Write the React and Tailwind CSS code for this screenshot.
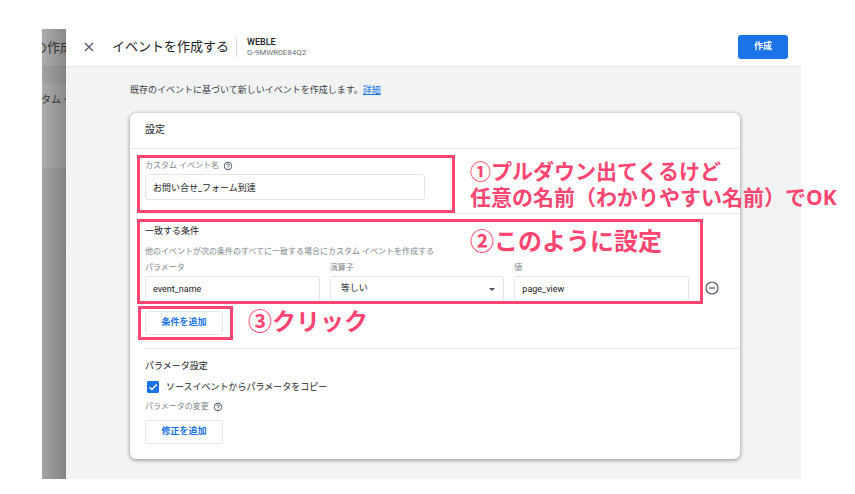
import { useState } from "react";

const HelpIcon = () => (
    <svg className="w-[10px] h-[10px] text-gray-600" viewBox="0 0 24 24" fill="currentColor" aria-hidden="true">
        <path d="M11 18h2v-2h-2v2zm1-16C6.48 2 2 6.48 2 12s4.48 10 10 10 10-4.48 10-10S17.52 2 12 2zm0 18c-4.41 0-8-3.59-8-8s3.59-8 8-8 8 3.59 8 8-3.59 8-8 8zm0-14c-2.21 0-4 1.79-4 4h2c0-1.1.9-2 2-2s2 .9 2 2c0 2-3 1.75-3 5h2c0-2.25 3-2.5 3-5 0-2.21-1.79-4-4-4z" />
    </svg>
)

const Field = ({ id, label, value, onChange }) => (
    <div className="flex-1 min-w-0">
        <label className="block text-[8px] leading-[16px] text-[#80868b]" htmlFor={id}>{label}</label>
        <input
        className="block w-full h-[26px] px-[7px] rounded-[3px] border border-[#e3e5e8] bg-white text-[9px]"
        id={id}
        type="text"
        value={value}
        onChange={(e) => onChange(e.target.value)}/>
    </div>
)

const OutlineButton = ({ children }) => (
    <button type="button" className="block w-[78px] h-[24px] rounded-[3px] border border-[#e3e5e8] bg-white text-[9px] font-bold text-[#1a73e8]">
        {children}
    </button>
)

const Backdrop = () => (
    <div className="relative w-[24px] shrink-0 overflow-hidden whitespace-nowrap bg-[#a1a3a5] text-[#37393b]" aria-hidden="true">
        <div className="h-[38px] bg-[#acacac] border-b border-[#a0a0a0] text-[13px] leading-[37px]">
            <span className="-ml-[8px]">の作成</span>
        </div>
        <div className="mt-[15px] h-[87px] bg-[#acacac] border-y border-[#a0a0a0] pt-[8px] text-[10px] leading-[18px]">
            <span className="-ml-[1px]">タム イベント</span>
        </div>
        <div className="absolute inset-0 bg-gradient-to-r from-black/0 to-black/20" />
    </div>
)

const Header = () => (
    <header className="flex items-center h-[38px] pl-[17px] pr-[13px] pb-[2px] bg-white border-b border-[#e3e5e8]">
        <button type="button" aria-label="閉じる" className="w-[12px] h-[12px] mr-[17px] text-gray-600">
            <svg viewBox="0 0 12 12" fill="none" stroke="currentColor" strokeWidth="1.2">
                <path d="M2 2l8 8M10 2l-8 8" />
            </svg>
        </button>
        <h1 className="text-[13px] leading-[20px]">イベントを作成する</h1>
        <div className="ml-[7px] pl-[10px] h-[20px] border-l border-[#dadce0] font-[Roboto,sans-serif]">
            <div className="text-[9px] leading-[10px] font-medium">WEBLE</div>
            <div className="text-[8px] leading-[12px] text-[#6b7075]">G-9MWR0E84Q2</div>
        </div>
        <button type="button" className="ml-auto w-[50px] h-[24px] rounded-[3px] bg-[#1a73e8] text-[9px] font-bold text-white">作成</button>
    </header>
)

const App = () => {
    const [eventName, setEventName] = useState("お問い合せ_フォーム到達")
    const [param, setParam] = useState("event_name")
    const [operator, setOperator] = useState("等しい")
    const [value, setValue] = useState("page_view")
    const [copy, setCopy] = useState(true)

    return (
        <div lang="ja" className="flex mt-[29px] mb-[15px] ml-[42px] mr-[54px] font-[Roboto,'Noto_Sans_CJK_JP',sans-serif] text-[#202124]">
            <Backdrop />
            <div className="flex-1 min-w-0 bg-[#f1f3f4]">
                <Header />
                <main className="pl-[64px] pr-[61px] pb-[20px]">
                    <p className="py-[15px] text-[9px] leading-[16px] text-[#3c4043]">
                        既存のイベントに基づいて新しいイベントを作成します。<a href="#" className="text-[#1a73e8] underline">詳細</a>
                    </p>

                    <form className="rounded-[6px] bg-white shadow-[0_1px_4px_rgba(0,0,0,0.45)]" onSubmit={(e) => e.preventDefault()}>
                        <h2 className="h-[36px] pl-[15px] border-b border-[#e8eaed] text-[10px] leading-[34px]">設定</h2>

                        <section className="relative h-[65px] ml-[15px] pt-[9px] border-b border-[#e8eaed]">
                            <div className="flex items-center gap-[4px] text-[#80868b]">
                                <label className="text-[8px] leading-[16px]" htmlFor="eventName">カスタム イベント名</label>
                                <HelpIcon />
                            </div>
                            <input
                            className="block w-[280px] h-[26px] px-[7px] rounded-[3px] border border-[#e3e5e8] bg-white text-[9px]"
                            id="eventName"
                            type="text"
                            value={eventName}
                            onChange={(e) => setEventName(e.target.value)}/>
                            <div className="absolute -left-[8px] top-[6px] w-[318px] h-[58px] border-3 border-[#ff4571]" />
                            <p className="absolute left-[325px] top-[9px] whitespace-nowrap font-['Open_Sans','Noto_Sans_CJK_JP',sans-serif] text-[21px] leading-[26px] font-bold text-[#ff4571]">
                                ①プルダウン出てくるけど<br />任意の名前（わかりやすい名前）でOK
                            </p>
                        </section>

                        <section className="relative h-[135px] ml-[15px] pt-[9px] border-b border-[#e8eaed]">
                            <h3 className="text-[9px] leading-[16px]">一致する条件</h3>
                            <p className="mt-[5px] text-[8px] leading-[16px] text-[#80868b]">他のイベントが次の条件のすべてに一致する場合にカスタム イベントを作成する</p>
                            <div className="flex items-end gap-[10px] pr-[21px]">
                                <Field id="param" label="パラメータ" value={param} onChange={setParam} />
                                <div className="relative flex-1 min-w-0">
                                    <label className="block text-[8px] leading-[16px] text-[#80868b]" htmlFor="operator">演算子</label>
                                    <select
                                    className="block w-full h-[26px] px-[10px] rounded-[3px] border border-[#e3e5e8] bg-white text-[9px] appearance-none"
                                    id="operator"
                                    value={operator}
                                    onChange={(e) => setOperator(e.target.value)}>
                                        <option>等しい</option>
                                        <option>含む</option>
                                    </select>
                                    <svg className="absolute right-[9px] bottom-[11px] w-[6px] h-[3px] text-gray-600" viewBox="0 0 6 3" fill="currentColor"><path d="M0 0h6L3 3z" /></svg>
                                </div>
                                <Field id="value" label="値" value={value} onChange={setValue} />
                                <button type="button" aria-label="条件を削除" className="ml-[6px] mb-[7px] w-[14px] h-[14px] text-gray-600">
                                    <svg viewBox="0 0 14 14" fill="none" stroke="currentColor" strokeWidth="1.2">
                                        <circle cx="7" cy="7" r="6" />
                                        <path d="M4 7h6" />
                                    </svg>
                                </button>
                            </div>
                            <div className="mt-[9px]">
                                <OutlineButton>条件を追加</OutlineButton>
                            </div>
                            <div className="absolute -left-[8px] top-[5px] w-[566px] h-[85px] border-3 border-[#ff4571]" />
                            <p className="absolute left-[325px] top-[12px] whitespace-nowrap text-[24px] leading-[32px] font-bold text-[#ff4571]">②このように設定</p>
                            <div className="absolute -left-[7px] top-[92px] w-[95px] h-[34px] border-3 border-[#ff4571]" />
                            <p className="absolute left-[103px] top-[92px] whitespace-nowrap text-[24px] leading-[32px] font-bold text-[#ff4571]">③クリック</p>
                        </section>

                        <section className="ml-[15px] pt-[9px] pb-[15px]">
                            <h3 className="text-[9px] leading-[16px]">パラメータ設定</h3>
                            <label className="flex items-center gap-[7px] mt-[5px] pl-[2px] text-[9px] leading-[16px]">
                                <span className="relative w-[12px] h-[12px]">
                                    <input
                                    className="block w-[12px] h-[12px] rounded-[1px] appearance-none border border-gray-600 checked:bg-[#1a73e8] checked:border-[#1a73e8]"
                                    type="checkbox"
                                    checked={copy}
                                    onChange={(e) => setCopy(e.target.checked)}/>
                                    {copy && (
                                        <svg className="absolute inset-0 pointer-events-none" viewBox="0 0 12 12" fill="none" stroke="white" strokeWidth="1.4">
                                            <path d="M2.5 6.2l2.4 2.4 4.8-5" />
                                        </svg>
                                    )}
                                </span>
                                ソースイベントからパラメータをコピー
                            </label>
                            <div className="flex items-center gap-[4px] mt-[4px] mb-[5px] text-[8px] leading-[16px] text-[#80868b]">
                                パラメータの変更
                                <HelpIcon />
                            </div>
                            <OutlineButton>修正を追加</OutlineButton>
                        </section>
                    </form>
                </main>
            </div>
        </div>
    )
}

export default App;
